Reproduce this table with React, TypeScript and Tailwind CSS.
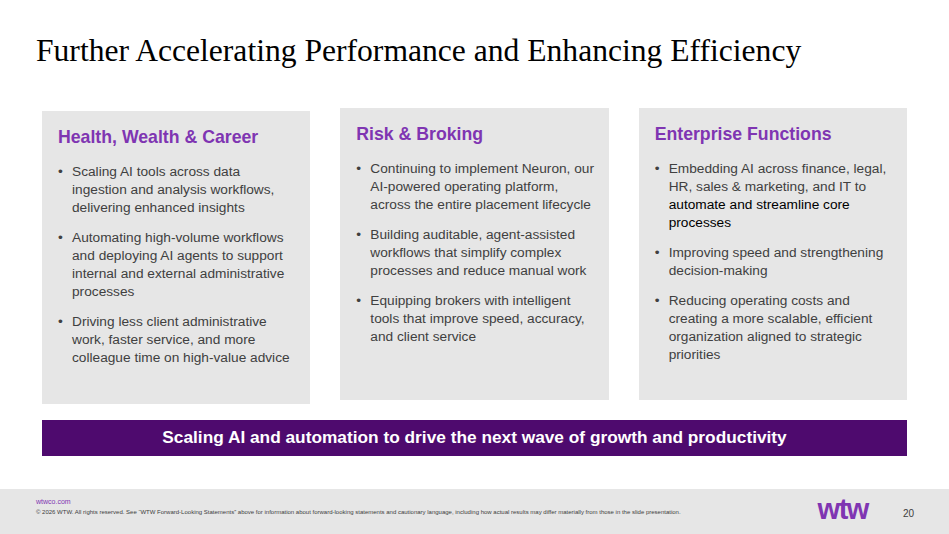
import React from "react"

type Part = { text: string; dark?: boolean }

interface Section {
  title: string
  bullets: Part[][]
  offset?: boolean
}

const sections: Section[] = [
  {
    title: "Health, Wealth & Career",
    offset: true,
    bullets: [
      [{ text: "Scaling AI tools across data ingestion and analysis workflows, delivering enhanced insights" }],
      [{ text: "Automating high-volume workflows and deploying AI agents to support internal and external administrative processes" }],
      [{ text: "Driving less client administrative work, faster service, and more colleague time on high-value advice" }],
    ],
  },
  {
    title: "Risk & Broking",
    bullets: [
      [{ text: "Continuing to implement Neuron, our AI-powered operating platform, across the entire placement lifecycle" }],
      [{ text: "Building auditable, agent-assisted workflows that simplify complex processes and reduce manual work" }],
      [{ text: "Equipping brokers with intelligent tools that improve speed, accuracy, and client service" }],
    ],
  },
  {
    title: "Enterprise Functions",
    bullets: [
      [
        { text: "Embedding AI across finance, legal, HR, sales & marketing, and IT to " },
        { text: "automate and streamline core processes", dark: true },
      ],
      [{ text: "Improving speed and strengthening decision-making" }],
      [{ text: "Reducing operating costs and creating a more scalable, efficient organization aligned to strategic priorities" }],
    ],
  },
]

function Card({ section }: { section: Section }) {
  return (
    <div
      className={
        section.offset
          ? "bg-[#e6e6e6] pl-4 pr-[18px] pt-[15px] mt-[3px] h-[293px]"
          : "bg-[#e6e6e6] pl-4 pr-[9px] pt-[15px] h-[292px]"
      }
    >
      <h2 className="text-[17.7px] leading-[22px] font-bold text-[#7f35b2]">{section.title}</h2>
      <ul className="mt-[15px] flex flex-col gap-[12px]">
        {section.bullets.map((parts, i) => (
          <li key={i} className="flex text-[13.7px] leading-[18px] text-[#404040]">
            <span className="w-[14px] shrink-0">•</span>
            <span>
              {parts.map((p, j) => (
                <span key={j} className={p.dark ? "text-black" : ""}>
                  {p.text}
                </span>
              ))}
            </span>
          </li>
        ))}
      </ul>
    </div>
  )
}

export default function App() {
  return (
    <div
      className="w-[949px] h-[534px] bg-white flex flex-col overflow-hidden"
      style={{ fontFamily: '"Liberation Sans", Arial, sans-serif' }}
    >
      <h1
        className="pl-[36px] pt-[33px] text-[31.6px] leading-[36px] text-black"
        style={{ fontFamily: '"Liberation Serif", "Times New Roman", serif' }}
      >
        Further Accelerating Performance and Enhancing Efficiency
      </h1>

      <div className="px-[42px] mt-[39px] grid grid-cols-3 gap-[30px] items-start">
        {sections.map((s) => (
          <Card key={s.title} section={s} />
        ))}
      </div>

      <div className="mx-[42px] mt-[16px] h-[36px] bg-[#4e0a6e] flex items-center justify-center">
        <span className="text-white font-bold text-[17.3px]">
          Scaling AI and automation to drive the next wave of growth and productivity
        </span>
      </div>

      <div className="mt-auto h-[45px] bg-[#e6e6e6] flex items-start pl-[36px] pr-[35px] pt-[9px]">
        <div className="flex-1 flex flex-col gap-[2px]">
          <span className="text-[7px] leading-[8px] text-[#7f35b2]">wtwco.com</span>
          <span className="text-[6px] leading-[8px] text-[#404040]">
            © 2026 WTW. All rights reserved. See “WTW Forward-Looking Statements” above for information about forward-looking statements and cautionary language, including how actual results may differ materially from those in the slide presentation.
          </span>
        </div>
        <span className="text-[29px] leading-[20px] font-black tracking-[-1.5px] text-[#7f35b2] mr-[35px] mt-[1px]">
          wtw
        </span>
        <span className="text-[10px] leading-[12px] text-[#404040] mt-[10px]">20</span>
      </div>
    </div>
  )
}
